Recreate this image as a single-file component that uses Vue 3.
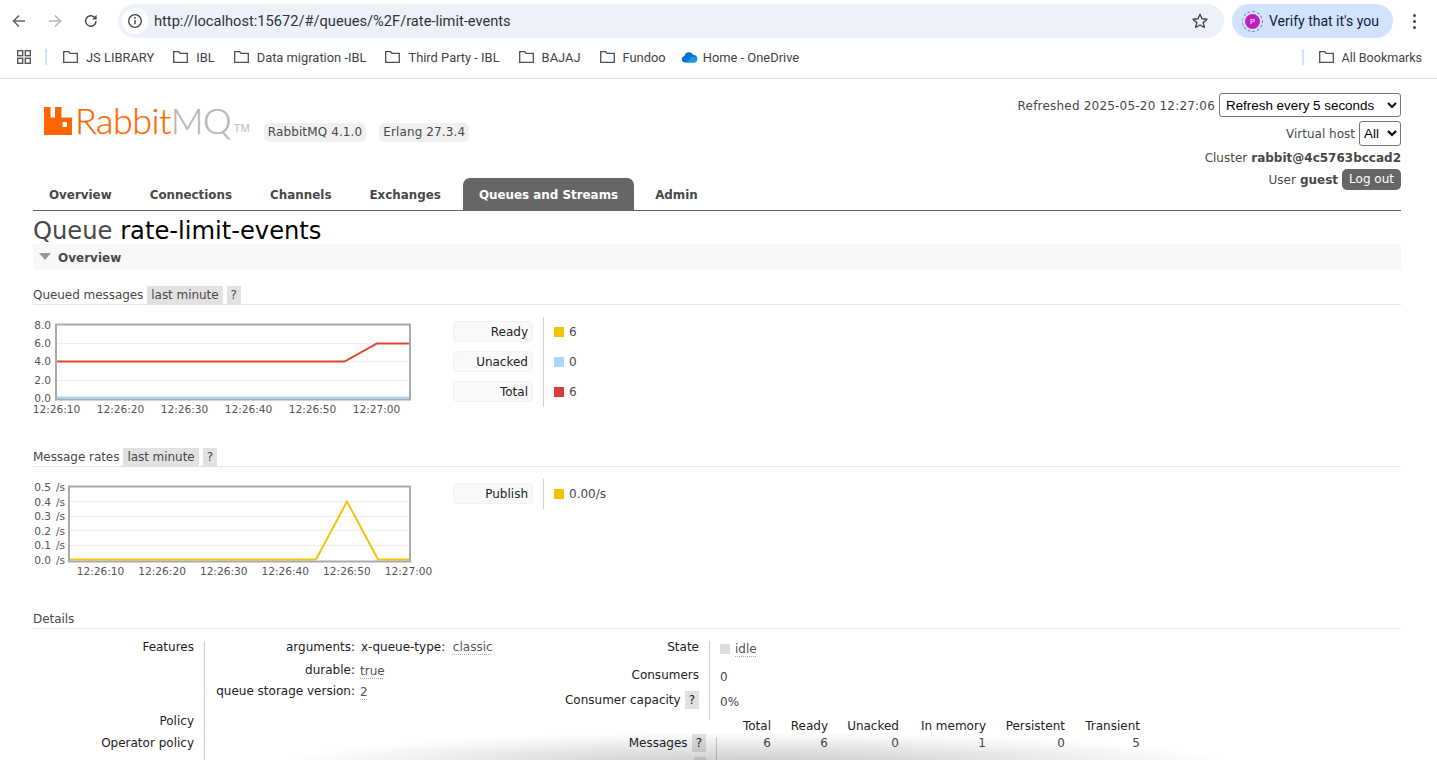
<template>
  <div class="browser">
    <div class="toolbar">
      <button class="nav first">
        <svg width="16" height="16" viewBox="0 0 16 16"><path d="M14 8H3M8 2.500 2.500 8 8 13.500" fill="none" stroke="#5f6368" stroke-width="1.500"/></svg>
      </button>
      <button class="nav">
        <svg width="16" height="16" viewBox="0 0 16 16"><path d="M2 8h11M8 2.500 13.500 8 8 13.500" fill="none" stroke="#b4b7ba" stroke-width="1.500"/></svg>
      </button>
      <button class="nav">
        <svg width="16" height="16" viewBox="0 0 16 16"><path d="M13 8a5.200 5.200 0 1 1-1.600-3.800L13 5.800" fill="none" stroke="#474a4d" stroke-width="1.500"/><path d="M13.600 1.800v4.600H9z" fill="#474a4d"/></svg>
      </button>
      <div class="urlbar">
        <span class="info">
          <svg width="16" height="16" viewBox="0 0 16 16"><circle cx="8" cy="8" r="6.300" fill="none" stroke="#3c4043" stroke-width="1.300"/><path d="M8 7v4.200" stroke="#3c4043" stroke-width="1.400"/><circle cx="8" cy="4.900" r=".9" fill="#3c4043"/></svg>
        </span>
        <span class="url">http://localhost:15672/#/queues/%2F/rate-limit-events</span>
        <svg class="star" width="18" height="18" viewBox="0 0 18 18"><path d="m9 2.200 2 4.600 5 .5-3.800 3.300 1.100 4.900L9 13l-4.300 2.500 1.100-4.900L2 7.300l5-.5z" fill="none" stroke="#45484b" stroke-width="1.400" stroke-linejoin="round"/></svg>
      </div>
      <div class="verify">
        <span class="avatar"><span>P</span></span>
        <span>Verify that it's you</span>
      </div>
      <span class="dots"><i></i><i></i><i></i></span>
    </div>

    <div class="bookmarks">
      <svg class="apps" width="16" height="16" viewBox="0 0 16 16"><g fill="none" stroke="#54575a" stroke-width="1.400"><rect x="1.700" y="1.700" width="5" height="5"/><rect x="9.300" y="1.700" width="5" height="5"/><rect x="1.700" y="9.300" width="5" height="5"/><rect x="9.300" y="9.300" width="5" height="5"/></g></svg>
      <span class="sep"></span>
      <span v-for="b in bookmarks" :key="b" class="bm">
        <svg width="17" height="14" viewBox="0 0 17 14"><path d="M1.700 12.300V1.700h5l1.500 1.700h7.100v8.900z" fill="none" stroke="#4c4f52" stroke-width="1.300"/></svg>
        {{ b }}
      </span>
      <span class="bm onedrive">
        <svg width="17" height="12" viewBox="0 0 17 12"><path d="M4 11.500a3.300 3.300 0 0 1-.6-6.500 4.800 4.800 0 0 1 9-1 3.800 3.800 0 0 1 .9 7.500z" fill="#0a72d1"/><path d="M6 11.500 10 6.500a3.800 3.800 0 0 1 6 2.500 2.700 2.700 0 0 1-2.700 2.500z" fill="#1c9be6"/></svg>
        Home - OneDrive
      </span>
      <span class="spacer"></span>
      <span class="sep right"></span>
      <span class="bm all">
        <svg width="17" height="14" viewBox="0 0 17 14"><path d="M1.700 12.300V1.700h5l1.500 1.700h7.100v8.900z" fill="none" stroke="#4c4f52" stroke-width="1.300"/></svg>
        All Bookmarks
      </span>
    </div>
  </div>

  <div class="page">
    <header class="head">
      <div class="brand">
        <svg class="logo-mark" width="28" height="28" viewBox="0 0 28 28"><path fill-rule="evenodd" d="M0 0h6.500v10.500H11V0h6.500v10.500H28V28H0zM18.500 15h4.500v5h-4.500z" fill="#ff6600"/></svg>
        <span class="logo-text">Rabbit<span class="mq">MQ</span></span>
        <span class="tm">TM</span>
        <span class="ver first">RabbitMQ 4.1.0</span>
        <span class="ver">Erlang 27.3.4</span>
      </div>
      <div class="status">
        <div class="status-row refresh">
          Refreshed 2025-05-20 12:27:06
          <select class="sel wide"><option>Refresh every 5 seconds</option></select>
        </div>
        <div class="status-row vhost">
          Virtual host
          <select class="sel narrow"><option>All</option></select>
        </div>
        <div class="status-row short">Cluster <b>rabbit@4c5763bccad2</b></div>
        <div class="status-row short">User <b>guest</b> <span class="logout">Log out</span></div>
      </div>
    </header>

    <nav class="tabs">
      <a v-for="t in tabs" :key="t" :class="{ active: t == 'Queues and Streams' }">{{ t }}</a>
    </nav>

    <h1><span class="h1-label">Queue</span> rate-limit-events</h1>

    <div class="section-bar"><span class="tri"></span>Overview</div>

    <h3 class="sub first-sub">Queued messages <span class="pill">last minute</span> <span class="pill">?</span></h3>

    <div class="chart-row">
      <svg class="chart" width="378" height="100" viewBox="0 0 378 100">
        <g fill="#555" font-size="10.600" text-anchor="end">
          <text x="18" y="11">8.0</text>
          <text x="18" y="29">6.0</text>
          <text x="18" y="47">4.0</text>
          <text x="18" y="66">2.0</text>
          <text x="18" y="84">0.0</text>
        </g>
        <path d="M24 25.500h353M24 43.500h353M24 62.500h353" stroke="#eee" fill="none"/>
        <path d="M24 43.500H311.500L344 25.500H377" fill="none" stroke="#e1462a" stroke-width="2"/>
        <path d="M24 79.500h353" stroke="#a8d8fb" stroke-width="2"/>
        <rect x="23" y="6.500" width="354" height="75" fill="none" stroke="#aaa" stroke-width="2"/>
        <g fill="#555" font-size="10.600" text-anchor="middle">
          <text v-for="(t, i) in times" :key="t" :x="23.500 + i * 64" y="95">{{ t }}</text>
        </g>
      </svg>
      <div class="legend">
        <div v-for="l in queued" :key="l.name" class="legend-row">
          <span class="legend-key">{{ l.name }}</span>
          <span class="legend-val"><i class="swatch" :style="{ background: l.color }"></i>{{ l.value }}</span>
        </div>
      </div>
    </div>

    <h3 class="sub rates-sub">Message rates <span class="pill">last minute</span> <span class="pill">?</span></h3>

    <div class="chart-row">
      <svg class="chart" width="378" height="100" viewBox="0 0 378 100">
        <g fill="#555" font-size="10.600" text-anchor="end" word-spacing="1.500">
          <text x="32" y="11">0.5 /s</text>
          <text x="32" y="26">0.4 /s</text>
          <text x="32" y="40">0.3 /s</text>
          <text x="32" y="55">0.2 /s</text>
          <text x="32" y="69">0.1 /s</text>
          <text x="32" y="84">0.0 /s</text>
        </g>
        <path d="M36 21.500h341M36 36.500h341M36 50.500h341M36 65.500h341" stroke="#eee" fill="none"/>
        <path d="M36 79.500H283L314 21.500 345 79.500H377" fill="none" stroke="#f1c40f" stroke-width="2"/>
        <rect x="36" y="6.500" width="341" height="75" fill="none" stroke="#aaa" stroke-width="2"/>
        <g fill="#555" font-size="10.600" text-anchor="middle">
          <text v-for="(t, i) in times" :key="t" :x="67.500 + i * 61.600" y="95">{{ t }}</text>
        </g>
      </svg>
      <div class="legend">
        <div v-for="l in rates" :key="l.name" class="legend-row">
          <span class="legend-key">{{ l.name }}</span>
          <span class="legend-val"><i class="swatch" :style="{ background: l.color }"></i>{{ l.value }}</span>
        </div>
      </div>
    </div>

    <h3 class="sub details-sub">Details</h3>

    <div class="details">
      <div class="col-left">
        <div class="kv feat">
          <div class="k">Features</div>
          <div class="v features">
            <div class="f-row"><span class="f-k">arguments:</span><span class="f-v args">x-queue-type:&nbsp; <u>classic</u></span></div>
            <div class="f-row short-row"><span class="f-k">durable:</span><span class="f-v"><u>true</u></span></div>
            <div class="f-row short-row"><span class="f-k">queue storage version:</span><span class="f-v"><u>2</u></span></div>
          </div>
        </div>
        <div class="kv"><div class="k">Policy</div><div class="v"></div></div>
        <div class="kv last"><div class="k">Operator policy</div><div class="v"></div></div>
      </div>

      <div class="col-right">
        <div class="state-table">
          <div class="r-row state"><span class="r-k">State</span><span class="r-v"><i class="idle"></i><u>idle</u></span></div>
          <div class="r-row cons"><span class="r-k">Consumers</span><span class="r-v">0</span></div>
          <div class="r-row"><span class="r-k">Consumer capacity <span class="pill small">?</span></span><span class="r-v">0%</span></div>
        </div>
        <div class="msg-table">
          <div class="m-row head-row">
            <span class="m-k"></span>
            <span v-for="c in msgCols" :key="c.name" class="m-c" :style="{ width: c.w + 'px' }">{{ c.name }}</span>
          </div>
          <div class="m-row msg-row">
            <span class="m-k">Messages <span class="pill small">?</span></span>
            <span v-for="c in msgCols" :key="c.name" class="m-c val" :style="{ width: c.w + 'px' }">{{ c.value }}</span>
          </div>
          <div class="m-row">
            <span class="m-k"><span class="pill small next">&nbsp;</span></span>
          </div>
        </div>
      </div>
    </div>
  </div>

  <div class="fade"></div>
</template>

<script setup>
const bookmarks = ['JS LIBRARY', 'IBL', 'Data migration -IBL', 'Third Party - IBL', 'BAJAJ', 'Fundoo']
const tabs = ['Overview', 'Connections', 'Channels', 'Exchanges', 'Queues and Streams', 'Admin']
const times = ['12:26:10', '12:26:20', '12:26:30', '12:26:40', '12:26:50', '12:27:00']

const queued = [
  { name: 'Ready', color: '#f0c400', value: 6 },
  { name: 'Unacked', color: '#a8d8fb', value: 0 },
  { name: 'Total', color: '#dd3a3f', value: 6 }
]

const rates = [
  { name: 'Publish', color: '#f0c400', value: '0.00/s' }
]

const msgCols = [
  { name: 'Total', w: 54, value: 6 },
  { name: 'Ready', w: 57, value: 6 },
  { name: 'Unacked', w: 71, value: 0 },
  { name: 'In memory', w: 87, value: 1 },
  { name: 'Persistent', w: 79, value: 0 },
  { name: 'Transient', w: 75, value: 5 }
]
</script>

<style>
html, body {
  height: 760px;
  overflow: hidden;
  background: #fff;
}
</style>

<style scoped>
.browser {
  height: 79px;
  border-bottom: 1px solid #e3e3e3;
  box-sizing: border-box;
  font-family: Roboto, "Liberation Sans", sans-serif;
  color: #3c4043;
}
.toolbar {
  height: 42px;
  display: flex;
  align-items: center;
}
.nav {
  width: 36px;
  height: 34px;
  border: 0;
  background: none;
  padding: 0;
  display: flex;
  align-items: center;
  justify-content: center;
}
.nav.first { margin-left: 1px; }
.urlbar {
  width: 1106px;
  height: 34px;
  margin-left: 9px;
  background: #edf2fa;
  border-radius: 17px;
  display: flex;
  align-items: center;
  font-size: 14.650px;
  color: #303336;
}
.info {
  width: 26px;
  height: 26px;
  margin-left: 4px;
  margin-right: 6px;
  background: #fff;
  border-radius: 50%;
  display: flex;
  align-items: center;
  justify-content: center;
}
.url { flex: 1; }
.star { margin-right: 15px; }
.verify {
  width: 161px;
  height: 34px;
  margin-left: 8px;
  background: #d3e3fd;
  border-radius: 17px;
  display: flex;
  align-items: center;
  font-size: 14px;
  color: #101c3c;
  box-sizing: border-box;
  padding-left: 10px;
  gap: 6px;
}
.avatar {
  width: 19px;
  height: 19px;
  border-radius: 50%;
  border: 1px dashed #5f7fb5;
  display: flex;
  align-items: center;
  justify-content: center;
  flex: none;
}
.avatar span {
  width: 15px;
  height: 15px;
  border-radius: 50%;
  background: #c01fc0;
  color: #fff;
  font-size: 8px;
  line-height: 15px;
  text-align: center;
}
.dots {
  margin-left: 20px;
  display: flex;
  flex-direction: column;
  gap: 3px;
}
.dots i {
  width: 3px;
  height: 3px;
  border-radius: 50%;
  background: #474a4d;
}
.bookmarks {
  height: 30px;
  display: flex;
  align-items: center;
  font-size: 12.900px;
  color: #3f4346;
  padding-left: 16px;
}
.apps { margin-right: 13px; }
.sep {
  width: 2px;
  height: 16px;
  background: #d3e3fd;
  margin-right: 15px;
}
.bm {
  display: flex;
  align-items: center;
  gap: 7px;
  margin-right: 18px;
  white-space: nowrap;
}
.bm.onedrive { margin-left: -3px; gap: 5px; }
.spacer { flex: 1; }
.sep.right { margin-right: 14px; }
.bm.all { margin-right: 15px; font-size: 12.500px; }

.page {
  padding: 0 36px 0 33px;
  font-family: "DejaVu Sans", Verdana, sans-serif;
  font-size: 12px;
  color: #484848;
}
.head {
  height: 98px;
  display: flex;
  justify-content: space-between;
}
.brand {
  display: flex;
  align-items: flex-start;
  padding-top: 28px;
  padding-left: 11px;
  box-sizing: border-box;
  height: 98px;
}
.logo-mark { flex: none; }
.logo-text {
  font-family: Lato, "Open Sans", sans-serif;
  font-weight: 300;
  font-size: 36px;
  line-height: 26px;
  color: #ff6600;
  margin-left: 3px;
  letter-spacing: -.55px;
  -webkit-text-stroke: .25px currentColor;
}
.mq { color: #b5b5b5; }
.tm {
  font-family: "Liberation Sans", sans-serif;
  font-size: 11px;
  color: #bbb;
  margin: 15px 0 0 3px;
}
.ver {
  background: #f0f0f0;
  border-radius: 5px;
  height: 19px;
  line-height: 19px;
  padding: 0 4px;
  margin-top: 16px;
  margin-left: 13px;
  color: #484848;
  white-space: nowrap;
  letter-spacing: .12px;
}
.ver.first { margin-left: 14px; }
.status {
  padding-top: 14px;
  text-align: right;
}
.status-row {
  height: 25px;
  display: flex;
  justify-content: flex-end;
  align-items: center;
  gap: 4px;
  box-sizing: border-box;
}
.status-row.refresh {
  height: 24px;
  padding-top: 2px;
  margin-bottom: 4px;
  letter-spacing: .2px;
}
.status-row.refresh .sel { margin-top: -2px; }
.status-row.short { height: 22px; padding-top: 2px; }
.status-row b { color: #484848; }
.sel {
  height: 24px;
  font-family: "Liberation Sans", sans-serif;
  font-size: 13.400px;
  color: #000;
  background: #fff;
  border: 1px solid #767676;
  border-radius: 3px;
  letter-spacing: 0;
}
.sel.wide { width: 182px; padding-left: 2px; }
.sel.narrow { width: 42px; height: 25px; }
.logout {
  background: #666;
  color: #fff;
  border-radius: 5px;
  height: 21px;
  line-height: 21px;
  padding: 0 7px;
  margin-top: -2px;
}
.tabs {
  height: 33px;
  display: flex;
  align-items: flex-end;
  border-bottom: 1px solid #666;
  font-weight: bold;
  font-size: 11.900px;
}
.tabs a {
  height: 32px;
  line-height: 35px;
  padding: 0 16px;
  margin-right: 6px;
  color: #484848;
  border-radius: 7px 7px 0 0;
}
.tabs a.active {
  background: #666;
  color: #fff;
  margin-right: 5px;
}
h1 {
  margin: 0;
  height: 33px;
  line-height: 40px;
  font-size: 24.200px;
  font-weight: normal;
  color: #000;
}
.h1-label { color: #484848; }
.section-bar {
  height: 23px;
  padding-top: 2px;
  background: #f8f8f8;
  font-weight: bold;
  color: #484848;
  display: flex;
  align-items: center;
  padding-left: 6px;
}
.tri {
  width: 0;
  height: 0;
  border-left: 6px solid transparent;
  border-right: 6px solid transparent;
  border-top: 7px solid #999;
  margin-right: 7px;
  margin-top: -2px;
}
.sub {
  margin: 0;
  font-size: 12px;
  font-weight: normal;
  color: #484848;
  height: 18px;
  padding-top: 2px;
  display: flex;
  align-items: center;
  gap: 4px;
  border-bottom: 1px solid #e6e6e6;
  letter-spacing: -.05px;
}
.first-sub { margin-top: 15px; }
.rates-sub { margin-top: 28px; }
.details-sub { margin-top: 28px; }
.pill {
  background: #e2e2e2;
  height: 19px;
  line-height: 19px;
  padding: 0 4px;
  display: inline-block;
}
.chart-row {
  display: flex;
  margin-top: 13px;
  height: 100px;
}
.chart {
  font-family: "DejaVu Sans", Verdana, sans-serif;
  flex: none;
  overflow: visible;
}
.legend {
  margin-left: 42px;
  margin-top: -1px;
}
.legend-row {
  display: flex;
  height: 30px;
}
.legend-key {
  width: 80px;
  height: 21px;
  line-height: 20px;
  margin-top: 4px;
  background: #f9f9f9;
  border: 1px solid #f2f2f2;
  border-radius: 4px;
  text-align: right;
  padding-right: 4px;
  box-sizing: border-box;
  color: #222;
  flex: none;
}
.legend-val {
  border-left: 1px solid #d0d0d0;
  margin-left: 10px;
  padding-left: 10px;
  display: flex;
  align-items: center;
  gap: 5px;
  color: #484848;
}
.swatch {
  width: 10px;
  height: 10px;
  display: inline-block;
}
.details {
  display: flex;
  margin-top: 12px;
  line-height: 13px;
}
.col-left { width: 522px; flex: none; }
.kv { display: flex; }
.k {
  width: 161px;
  text-align: right;
  color: #222;
  flex: none;
  height: 22px;
}
.v {
  border-left: 1px solid #ccc;
  margin-left: 10px;
  height: 22px;
  flex: 1;
}
.kv.last .k, .kv.last .v { height: 50px; }
.feat .k, .feat .v.features { height: 74px; }
.f-row {
  display: flex;
  height: 23px;
}
.f-row.short-row { height: 21px; }
.f-k {
  width: 150px;
  text-align: right;
  color: #222;
  flex: none;
}
.f-v {
  margin-left: 5px;
  white-space: nowrap;
  color: #222;
  padding-top: 1px;
}
.f-v.args { margin-left: 6px; padding-top: 0; }
u {
  color: #555;
  text-decoration: underline dotted #aaa;
  text-underline-offset: 3px;
}
.col-right { flex: 1; }
.r-row { display: flex; height: 26px; }
.r-row.state { height: 28px; }
.r-row.cons { height: 25px; }
.r-k {
  width: 144px;
  text-align: right;
  color: #222;
  flex: none;
  white-space: nowrap;
  display: flex;
  justify-content: flex-end;
  gap: 4px;
}
.r-v {
  border-left: 1px solid #ccc;
  margin-left: 10px;
  padding-left: 10px;
  padding-top: 2px;
  display: flex;
  align-items: flex-start;
  gap: 5px;
}
.idle {
  width: 10px;
  height: 10px;
  background: #ddd;
  margin-top: 1px;
}
.pill.small {
  height: 18px;
  line-height: 18px;
  padding: 0 4px;
  margin-top: -3px;
}
.m-row { display: flex; height: 17px; }
.m-row.msg-row { height: 20px; }
.m-k {
  width: 151px;
  text-align: right;
  color: #222;
  flex: none;
  display: flex;
  justify-content: flex-end;
  gap: 4px;
  border-right: 1px solid #ccc;
  padding-right: 10px;
}
.head-row .m-k { border-right: 0; padding-right: 11px; }
.pill.small.next { margin-top: 0; }
.m-c {
  text-align: right;
  color: #222;
  flex: none;
}
.m-c.val { color: #484848; }
.fade {
  position: absolute;
  left: 280px;
  top: 732px;
  width: 950px;
  height: 66px;
  pointer-events: none;
  background: radial-gradient(closest-side, rgba(0,0,0,.22), rgba(0,0,0,.1) 55%, rgba(0,0,0,0));
}
</style>
